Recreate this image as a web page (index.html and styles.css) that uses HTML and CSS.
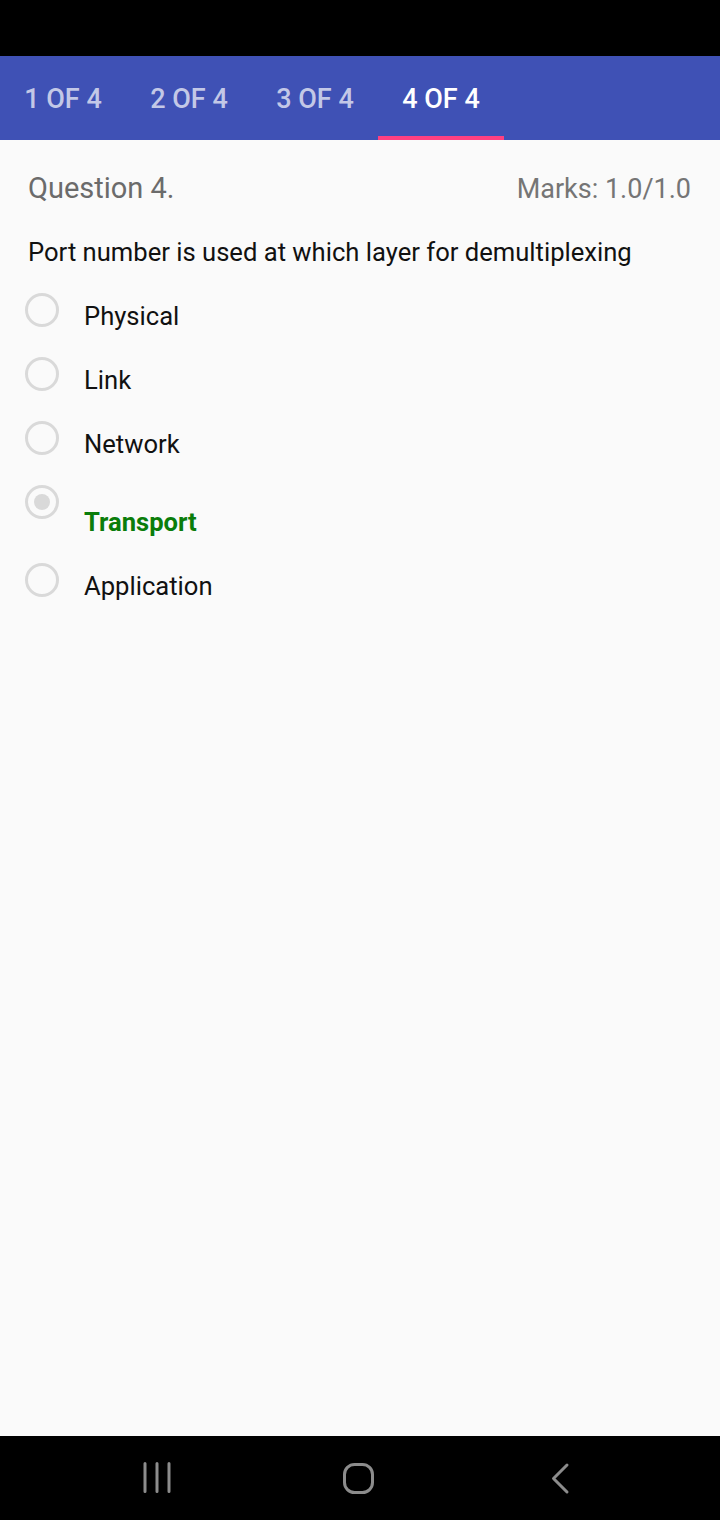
FILE: index.html
```html
<!DOCTYPE html>
<html>
<head>
<meta charset="utf-8">
<link rel="stylesheet" href="styles.css">
</head>
<body>
<div class="screen">
  <div class="status"></div>
  <div class="tabs">
    <div class="tab">1 OF 4</div>
    <div class="tab">2 OF 4</div>
    <div class="tab">3 OF 4</div>
    <div class="tab active">4 OF 4</div>
  </div>
  <main class="content">
    <div class="qhead">
      <span class="qnum">Question 4.</span>
      <span class="marks">Marks: 1.0/1.0</span>
    </div>
    <p class="qtext">Port number is used at which layer for demultiplexing</p>
    <ul class="options">
      <li class="opt">
        <svg class="radio" viewBox="0 0 36 36"><circle cx="18" cy="18" r="15.5" fill="none" stroke="#d9d9d9" stroke-width="3"/></svg>
        <span class="label">Physical</span>
      </li>
      <li class="opt">
        <svg class="radio" viewBox="0 0 36 36"><circle cx="18" cy="18" r="15.5" fill="none" stroke="#d9d9d9" stroke-width="3"/></svg>
        <span class="label">Link</span>
      </li>
      <li class="opt">
        <svg class="radio" viewBox="0 0 36 36"><circle cx="18" cy="18" r="15.5" fill="none" stroke="#d9d9d9" stroke-width="3"/></svg>
        <span class="label">Network</span>
      </li>
      <li class="opt correct">
        <svg class="radio" viewBox="0 0 36 36"><circle cx="18" cy="18" r="15.5" fill="none" stroke="#d9d9d9" stroke-width="3"/><circle cx="18" cy="18" r="8" fill="#d9d9d9"/></svg>
        <span class="label">Transport</span>
      </li>
      <li class="opt">
        <svg class="radio" viewBox="0 0 36 36"><circle cx="18" cy="18" r="15.5" fill="none" stroke="#d9d9d9" stroke-width="3"/></svg>
        <span class="label">Application</span>
      </li>
    </ul>
  </main>
  <nav class="navbar">
    <svg class="nav-icon" viewBox="0 0 40 40"><path d="M5 5.5v28M17 5.5v28M29 5.5v28" stroke="#8c8c8c" stroke-width="3" stroke-linecap="round" fill="none"/></svg>
    <svg class="nav-icon" viewBox="0 0 40 40"><rect x="4.5" y="6.5" width="28" height="28" rx="10" fill="none" stroke="#8c8c8c" stroke-width="3"/></svg>
    <svg class="nav-icon" viewBox="0 0 40 40"><path d="M27 7L13.5 20.5L27 34" stroke="#8c8c8c" stroke-width="3" stroke-linecap="round" stroke-linejoin="round" fill="none"/></svg>
  </nav>
</div>
</body>
</html>
```

FILE: styles.css
```css
* { box-sizing: border-box; }
html, body { margin: 0; padding: 0; }
body {
  font-family: Roboto, "Noto Sans", sans-serif;
  background: #000;
}
.screen {
  width: 720px;
  height: 1520px;
  display: flex;
  flex-direction: column;
  background: #fafafa;
}
.status {
  height: 56px;
  background: #000;
  flex: none;
}
.tabs {
  height: 84px;
  background: #3f51b5;
  display: flex;
  flex: none;
}
.tab {
  width: 126px;
  display: flex;
  align-items: center;
  justify-content: center;
  font-size: 27px;
  font-weight: 500;
  color: rgba(255,255,255,0.7);
  border-bottom: 4px solid transparent;
  padding-top: 6px;
}
.tab.active {
  color: #fff;
  border-bottom-color: #ff4081;
}
.content {
  flex: 1;
  padding: 0 28px;
}
.qhead {
  display: flex;
  justify-content: space-between;
  align-items: baseline;
  padding-top: 31px;
}
.qnum {
  font-size: 29px;
  color: #6b6b6b;
  line-height: 34px;
}
.marks {
  font-size: 27px;
  color: #757575;
  margin-right: 1px;
}
.qtext {
  margin: 32px 0 0;
  font-size: 25.6px;
  line-height: 30px;
  color: #111;
}
.options {
  list-style: none;
  margin: 25px 0 0 -4px;
  padding: 0;
}
.opt {
  display: flex;
  align-items: flex-start;
  min-height: 64px;
}
.radio {
  width: 36px;
  height: 36px;
  flex: none;
}
.label {
  margin-left: 24px;
  margin-top: 9px;
  font-size: 25.6px;
  line-height: 30px;
  color: #111;
}
.opt.correct {
  min-height: 78px;
}
.opt.correct .label {
  margin-top: 23px;
  color: #0a7d0a;
  font-weight: 700;
}
.navbar {
  height: 84px;
  background: #000;
  flex: none;
  display: flex;
  align-items: center;
  padding: 0 140px;
  justify-content: space-between;
}
.nav-icon {
  width: 40px;
  height: 40px;
}
```
